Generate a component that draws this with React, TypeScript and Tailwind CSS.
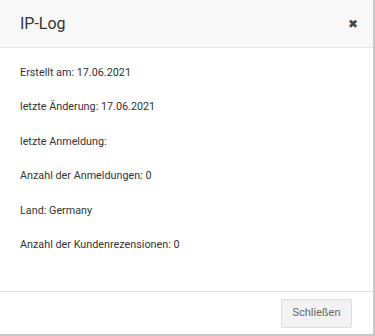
export default function App() {
  const rows = [
    "Erstellt am: 17.06.2021",
    "letzte Änderung: 17.06.2021",
    "letzte Anmeldung:",
    "Anzahl der Anmeldungen: 0",
    "Land: Germany",
    "Anzahl der Kundenrezensionen: 0",
  ]

  return (
    <div className="h-[336px] w-[375px] overflow-hidden bg-[#c8c8c8] font-['Roboto',sans-serif]">
      <div className="flex h-[334px] w-[373px] flex-col bg-white">
        {/* Header */}
        <div className="flex h-[48px] items-center justify-between border-b border-[#e5e5e5] bg-[#f8f8f8] pl-[20px] pr-[15px]">
          <h2 className="text-[16px] text-[#333]">IP-Log</h2>
          <span className="text-[12px] leading-none text-[#444]">✖</span>
        </div>

        {/* Body */}
        <div className="flex flex-1 flex-col gap-[18px] px-[20px] pt-[17px] text-[10.8px] text-[#333]">
          {rows.map((r) => (
            <p key={r} className="leading-[16.4px]">
              {r}
            </p>
          ))}
        </div>

        {/* Footer */}
        <div className="flex h-[43px] items-start justify-end border-t border-[#e5e5e5] pr-[21px] pt-[7px]">
          <button className="h-[29px] w-[71px] rounded-[2px] border border-[#ddd] bg-[#f2f2f2] text-[11px] text-[#666]">
            Schließen
          </button>
        </div>
      </div>
    </div>
  )
}
